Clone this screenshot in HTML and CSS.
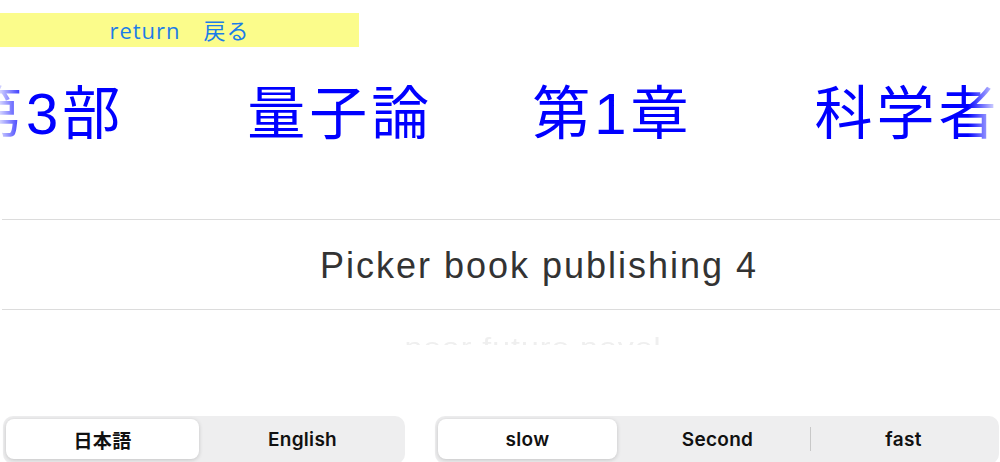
FILE: index.html
```html
<!DOCTYPE html>
<html lang="ja">
<head>
    <meta charset="UTF-8">
    <meta name="viewport" content="width=device-width, initial-scale=1.0">
    <title>Picker book</title>
    <link rel="stylesheet" href="styles.css">
</head>
<body>

    <div class="topbar">return　戻る</div>

    <div class="chapters">
        <span class="chapter">第3部</span>
        <span class="chapter">量子論</span>
        <span class="chapter">第1章</span>
        <span class="chapter">科学者</span>
    </div>

    <div class="picker">
        <div class="picker-row">Picker book publishing 4</div>
    </div>
    <div class="picker-next">
        <span>near future novel</span>
    </div>

    <div class="segments">
        <div class="segment-group lang">
            <button class="segment selected">日本語</button>
            <button class="segment">English</button>
        </div>
        <div class="segment-group speed">
            <button class="segment selected">slow</button>
            <button class="segment">Second</button>
            <span class="divider"></span>
            <button class="segment">fast</button>
        </div>
    </div>

</body>
</html>
```

FILE: styles.css
```css
body {
    margin: 0;
    background-color: white;
    font-family: "Liberation Sans", "Noto Sans CJK JP", sans-serif;
    overflow: hidden;
    height: 462px;
}

.topbar {
    width: 359px;
    height: 34px;
    margin-top: 13px;
    background: #fbfc8b;
    color: #1b7de8;
    font-family: "Open Sans", "Noto Sans CJK JP", sans-serif;
    font-size: 22px;
    letter-spacing: 1px;
    line-height: 35px;
    text-align: center;
}

.chapters {
    display: flex;
    gap: 101px;
    margin-top: 31px;
    margin-left: -36px;
    width: 1036px;
    height: 72px;
    align-items: center;
    white-space: nowrap;
    overflow: hidden;
    color: #0000ff;
    font-family: "Liberation Sans", "Noto Sans CJK JP", sans-serif;
    font-size: 58px;
    letter-spacing: 4px;
    line-height: 72px;
    -webkit-mask-image: linear-gradient(to right, transparent 0, transparent 30px, black 64px, black 1004px, transparent 1036px);
    mask-image: linear-gradient(to right, transparent 0, transparent 30px, black 64px, black 1004px, transparent 1036px);
}

.chapter {
    flex: none;
}

.chapter:nth-child(2) {
    margin-left: 22px;
}

.chapter:nth-child(3) {
    margin-left: -2px;
}

.chapter:nth-child(4) {
    margin-left: 21px;
}

.picker {
    margin-top: 69px;
    margin-left: 2px;
    border-top: 1px solid #dcdcdc;
    border-bottom: 1px solid #dcdcdc;
}

.picker-row {
    height: 89px;
    line-height: 92px;
    padding-left: 76px;
    text-align: center;
    font-size: 36px;
    letter-spacing: 2px;
    color: #333;
}

.picker-next {
    height: 35px;
    overflow: hidden;
    padding-left: 66px;
    text-align: center;
    font-size: 32px;
    letter-spacing: 1px;
    color: #efefef;
}

.picker-next span {
    display: inline-block;
    line-height: 30px;
    margin-top: 22px;
    transform: scaleY(0.8);
}

.segments {
    display: flex;
    gap: 30px;
    margin-top: 71px;
    margin-left: 3px;
}

.segment-group {
    display: flex;
    align-items: center;
    height: 48px;
    padding: 3px;
    box-sizing: border-box;
    background: #eeeeef;
    border-radius: 10px;
}

.lang {
    width: 402px;
}

.speed {
    width: 564px;
}

.segment {
    flex: 1;
    height: 40px;
    align-self: flex-start;
    border: none;
    background: none;
    border-radius: 8px;
    font-family: Inter, "Noto Sans CJK JP", sans-serif;
    font-size: 19px;
    font-weight: 600;
    letter-spacing: 0.3px;
    color: #111;
    padding: 0;
    cursor: pointer;
}

.segment.selected {
    background: white;
    box-shadow: 0 1px 4px rgba(0, 0, 0, 0.18);
}

.lang .segment:first-child {
    flex: none;
    width: 193px;
    margin-right: 4px;
}

.speed .segment:first-child {
    flex: none;
    width: 179px;
    margin-right: 8px;
}

.divider {
    width: 1px;
    height: 24px;
    align-self: flex-start;
    margin-top: 8px;
    background: #c8c8c8;
}
```
